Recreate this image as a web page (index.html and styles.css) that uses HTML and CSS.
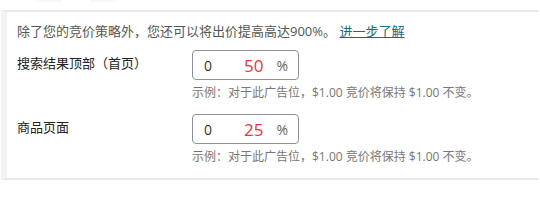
FILE: index.html
```html
<!DOCTYPE html>
<html lang="zh-CN">
<head>
  <meta charset="UTF-8">
  <title>竞价调整</title>
  <link rel="stylesheet" href="styles.css">
</head>
<body>
  <div class="tabs">
    <span class="tab"></span>
    <span class="tab"></span>
  </div>

  <div class="panel">
    <p class="intro">除了您的竞价策略外，您还可以将出价提高高达900%。 <a href="#" class="learn">进一步了解</a></p>

    <div class="row">
      <div class="label">搜索结果顶部（首页）</div>
      <div class="field">
        <div class="pct-box">
          <span class="base">0</span>
          <span class="value">50</span>
          <span class="unit">%</span>
        </div>
        <div class="hint">示例：对于此广告位，$1.00 竞价将保持 $1.00 不变。</div>
      </div>
    </div>

    <div class="row">
      <div class="label">商品页面</div>
      <div class="field">
        <div class="pct-box">
          <span class="base">0</span>
          <span class="value">25</span>
          <span class="unit">%</span>
        </div>
        <div class="hint">示例：对于此广告位，$1.00 竞价将保持 $1.00 不变。</div>
      </div>
    </div>
  </div>
</body>
</html>
```

FILE: styles.css
```css
body {
  margin: 0;
  background-color: #fff;
  font-family: "Open Sans", "Noto Sans CJK SC", sans-serif;
  color: #333;
}

/* faint tabs above the panel */
.tabs {
  height: 10px;
  display: flex;
  gap: 28px;
  padding-left: 37px;
}

.tab {
  width: 25px;
  height: 2px;
  background-color: #f7f7f7;
}

.panel {
  width: 537px;
  margin-left: 1px;
  border-top: 2px solid #e8e8e8;
  border-bottom: 2px solid #e8e8e8;
  border-left: 6px solid #f3f3f5;
  box-sizing: border-box;
  height: 170px;
  padding: 10px 0 0 10px;
}

.intro {
  margin: 0 0 10px;
  font-size: 13px;
  line-height: 18px;
  color: #555;
}

.learn {
  color: #0e6c86;
  text-decoration: underline;
}

.row {
  display: flex;
  margin-bottom: 12px;
}

.label {
  width: 175px;
  font-size: 13px;
  line-height: 20px;
  padding-top: 3px;
  color: #222;
}

.pct-box {
  width: 107px;
  height: 30px;
  box-sizing: border-box;
  border: 1px solid #8c919c;
  border-radius: 4px;
  display: flex;
  align-items: center;
  padding: 0 10px 0 11px;
  font-size: 14px;
}

.base {
  color: #333;
  flex: 1;
}

.value {
  color: #f0313b;
  font-size: 17px;
  margin-right: 13px;
}

.unit {
  color: #666;
}

.hint {
  margin-top: 4px;
  font-size: 12px;
  line-height: 18px;
  color: #777;
}
```
